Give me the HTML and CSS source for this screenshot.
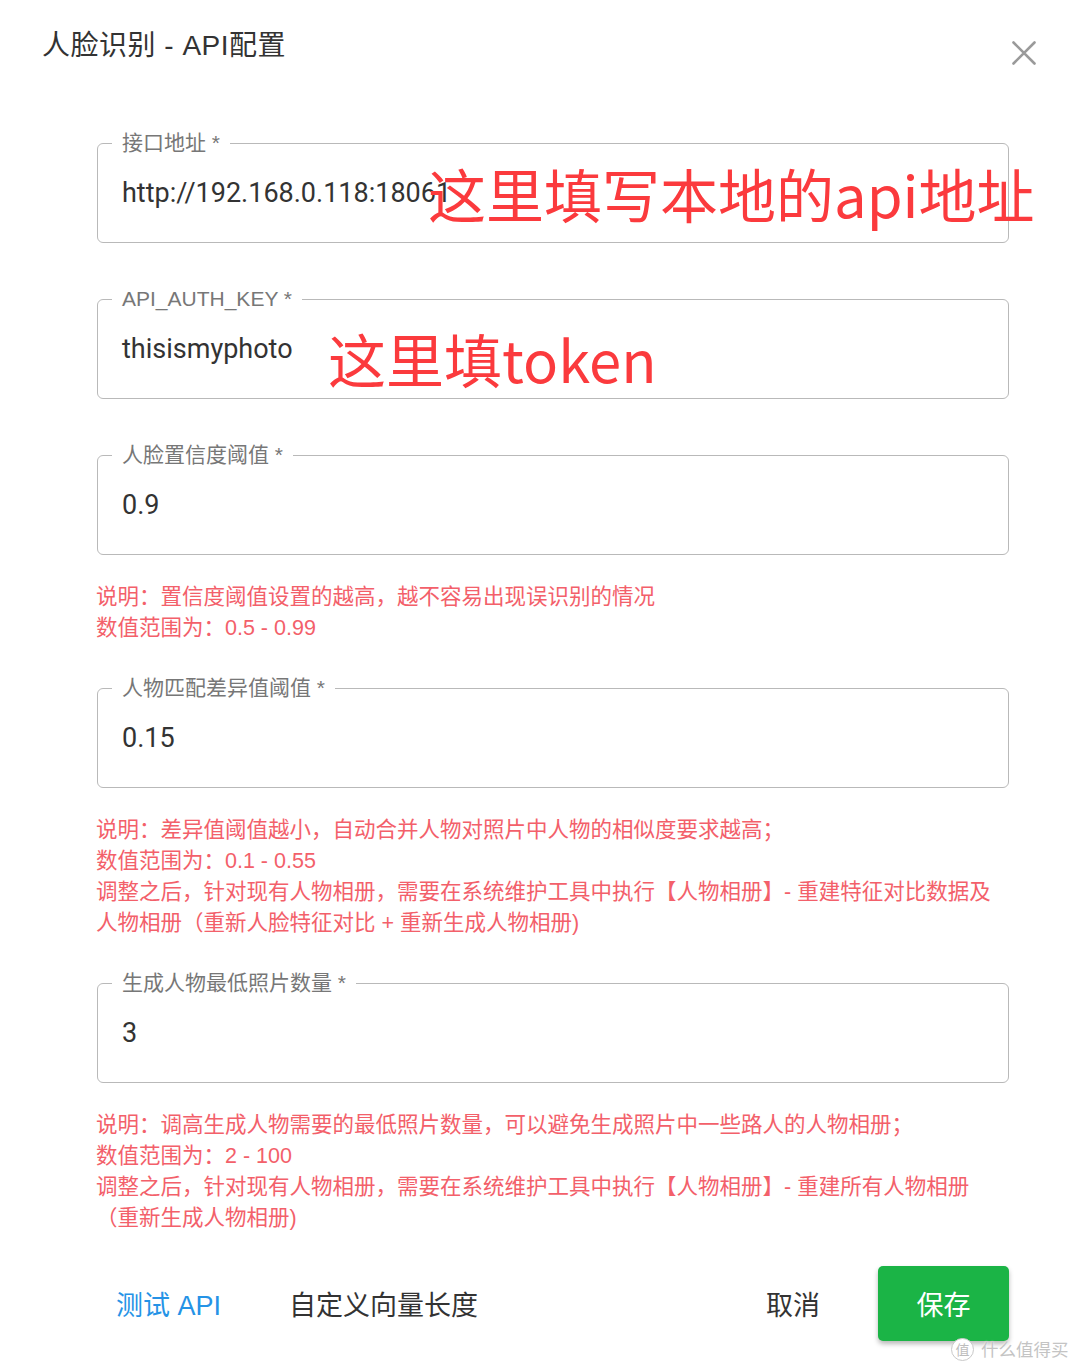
FILE: index.html
```html
<!DOCTYPE html>
<html lang="zh-CN">
<head>
<meta charset="utf-8">
<title>人脸识别 - API配置</title>
<link rel="stylesheet" href="styles.css">
</head>
<body>
<div class="dialog">
  <div class="header">
    <h1 class="title">人脸识别 - API配置</h1>
    <button class="close" aria-label="关闭">
      <svg width="24" height="24" viewBox="0 0 24 24"><path d="M1.5 1.5 L22.5 22.5 M22.5 1.5 L1.5 22.5" stroke="#9a9a9a" stroke-width="2.6" stroke-linecap="round" fill="none"/></svg>
    </button>
  </div>

  <div class="form">
    <div class="field">
      <fieldset class="outline">
        <legend>接口地址 *</legend>
        <div class="value">http://192.168.0.118:18061</div>
      </fieldset>
      <div class="annot annot-1">这里填写本地的api地址</div>
    </div>

    <div class="field">
      <fieldset class="outline">
        <legend>API_AUTH_KEY *</legend>
        <div class="value">thisismyphoto</div>
      </fieldset>
      <div class="annot annot-2">这里填token</div>
    </div>

    <div class="field">
      <fieldset class="outline">
        <legend>人脸置信度阈值 *</legend>
        <div class="value">0.9</div>
      </fieldset>
    </div>
    <div class="note">
      说明：置信度阈值设置的越高，越不容易出现误识别的情况<br>
      数值范围为：0.5 - 0.99
    </div>

    <div class="field">
      <fieldset class="outline">
        <legend>人物匹配差异值阈值 *</legend>
        <div class="value">0.15</div>
      </fieldset>
    </div>
    <div class="note">
      说明：差异值阈值越小，自动合并人物对照片中人物的相似度要求越高；<br>
      数值范围为：0.1 - 0.55<br>
      调整之后，针对现有人物相册，需要在系统维护工具中执行【人物相册】- 重建特征对比数据及人物相册（重新人脸特征对比 + 重新生成人物相册)
    </div>

    <div class="field">
      <fieldset class="outline">
        <legend>生成人物最低照片数量 *</legend>
        <div class="value">3</div>
      </fieldset>
    </div>
    <div class="note">
      说明：调高生成人物需要的最低照片数量，可以避免生成照片中一些路人的人物相册；<br>
      数值范围为：2 - 100<br>
      调整之后，针对现有人物相册，需要在系统维护工具中执行【人物相册】- 重建所有人物相册（重新生成人物相册)
    </div>

    <div class="actions">
      <div class="group">
        <button class="btn btn-link">测试 API</button>
        <button class="btn btn-text btn-gap">自定义向量长度</button>
      </div>
      <div class="group">
        <button class="btn btn-text">取消</button>
        <button class="btn btn-primary">保存</button>
      </div>
    </div>
  </div>
</div>
<div class="watermark"><span class="wm-icon">值</span><span class="wm-text">什么值得买</span></div>
</body>
</html>
```
FILE: styles.css
```css
html, body {
  margin: 0;
  padding: 0;
  background: #ffffff;
}
body {
  font-family: "Liberation Sans", "Noto Sans CJK SC", sans-serif;
  color: #333333;
  position: relative;
  min-height: 1371px;
  overflow: hidden;
}
.dialog {
  padding: 28px 44px 0 42px;
}
.header {
  display: flex;
  justify-content: space-between;
  align-items: flex-start;
}
.title {
  margin: 0;
  font-size: 28px;
  letter-spacing: 0.5px;
  line-height: 36px;
  font-weight: normal;
  color: #333333;
}
.close {
  margin-top: 13px;
  padding: 0;
  border: 0;
  background: transparent;
  width: 24px;
  height: 24px;
  display: block;
}
.close svg { display: block; }

.form {
  margin: 66px 0 0 55px;
  width: 912px;
}
.field {
  position: relative;
  margin-bottom: 44px;
}
.outline {
  margin: 0;
  min-width: 0;
  box-sizing: border-box;
  width: 912px;
  border: 1px solid #b9b9b9;
  border-radius: 6px;
  padding: 22px 24px 33px 24px;
}
.outline legend {
  margin-left: -10px;
  padding: 0 10px;
  font-size: 21px;
  line-height: 24px;
  color: #777777;
}
.value {
  font-family: Roboto, "Liberation Sans", sans-serif;
  font-size: 27px;
  line-height: 32px;
  color: #333333;
  white-space: nowrap;
}
.annot {
  position: absolute;
  font-family: "Noto Sans CJK SC", sans-serif;
  font-size: 58px;
  line-height: 58px;
  color: #fb3a3d;
  white-space: nowrap;
}
.annot-1 { left: 331px; top: 33px; }
.annot-2 { left: 231px; top: 42px; }

.field + .note { margin-top: -17px; }
.note {
  font-size: 21.5px;
  line-height: 31px;
  color: #f3606a;
  margin-bottom: 32px;
  margin-left: -1px;
}

.actions {
  display: flex;
  justify-content: space-between;
  align-items: center;
  margin-top: 20px;
}
.group {
  display: flex;
  align-items: center;
}
.btn {
  font-family: "Liberation Sans", "Noto Sans CJK SC", sans-serif;
  font-size: 27px;
  height: 75px;
  padding: 0 19px;
  border: 0;
  background: transparent;
  color: #333333;
  border-radius: 5px;
}
.btn-link { color: #2593e6; }
.btn-gap { margin-left: 30px; }
.btn-primary {
  margin-left: 39px;
  width: 131px;
  padding: 0;
  background: #1bb446;
  color: #ffffff;
  box-shadow: 0 3px 5px rgba(0, 0, 0, 0.28);
}

.watermark {
  position: absolute;
  left: 951px;
  top: 1337px;
  display: flex;
  align-items: center;
  font-family: "Noto Sans CJK SC", sans-serif;
}
.wm-icon {
  width: 21px;
  height: 21px;
  border-radius: 50%;
  border: 1.5px solid #c9c9c9;
  background: #ffffff;
  color: #bdbdbd;
  font-size: 14px;
  line-height: 21px;
  text-align: center;
}
.wm-text {
  margin-left: 7px;
  font-size: 17.5px;
  line-height: 24px;
  color: #c4c4c4;
  text-shadow: 0 0 2px #ffffff;
}
```
